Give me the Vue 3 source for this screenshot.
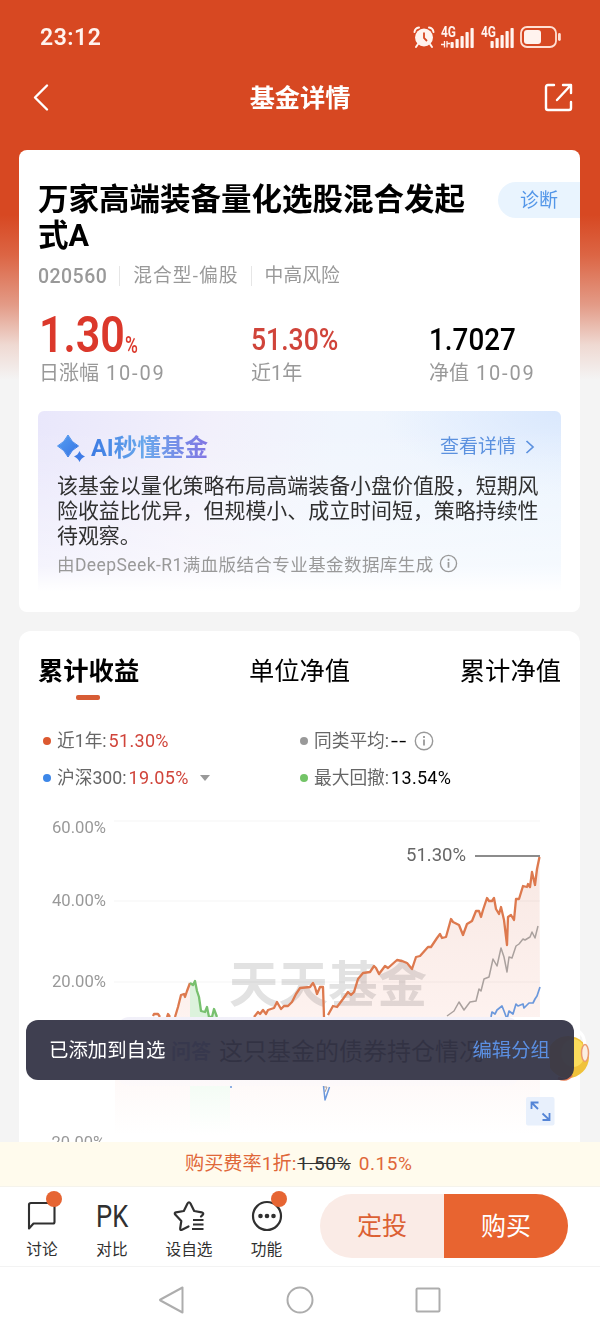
<script setup>
import { ref } from 'vue'

const fund = {
  name: '万家高端装备量化选股混合发起式A',
  code: '020560',
  type: '混合型-偏股',
  risk: '中高风险'
}

const tabs = ['累计收益', '单位净值', '累计净值']
const activeTab = ref(0)

const signals = [[6, 9, 12, 16, 20], [7, 10, 13, 17, 20]]

const gridLines = [
  { label: '60.00%', y: 821, textY: 833 },
  { label: '40.00%', y: 901, textY: 906 },
  { label: '20.00%', y: 982, textY: 987 }
]

// Chart series
const fundStart = '153,1016 154,1014 158,1014 160,1017'
const fundStart2 = '167,1017 168,1014 170,1017'
const fundRise = '175,1017 178,1007 181,995 184,994 185,997 187,991 190,983'
const drawdown = '190,983 193,985 195,981 197,991 199,997 201,1011 205,1012 207,1007 209,1017 212,1017 214,1009 217,1017'
const fundMid = '254,1017 258,1012 260,1014 263,1010 266,1014 268,1010 274,1008 277,1002 281,1009 284,1006 288,1006 292,1002 296,994 300,988 310,987 313,983 315,987 317,994 320,987 323,987 324,1017'
const fundMain = '328,1015 333,1006 337,1007 343,999 348,992 351,995 354,992 358,979 363,973 370,972 374,966 376,968 379,974 385,966 388,968 397,960 402,961 407,963 412,969 416,957 420,956 428,947 431,947 437,938 440,934 442,938 446,937 451,919 453,922 459,925 463,935 467,924 472,921 476,911 479,911 481,917 483,910 487,898 489,901 492,901 494,898 496,909 499,914 501,907 504,920 507,945 508,917 511,915 514,920 516,899 519,899 523,886 527,887 528,884 530,887 532,872 535,885 537,869 539.5,857'
const average = '447,1016 454,1011 459,1002 464,1010 470,1002 476,1001 479,989 481,991 484,979 489,977 493,959 497,966 501,948 504,957 507,972 509,957 512,958 516,946 519,944 523,939 525,940 530,937 532,932 535,938 538,926'
const index300 = '491,1017 492,1012 495,1014 497,1010 502,1006 504,1011 507,1019 509,1011 513,1014 516,1004 518,1006 523,1004 524,1008 529,1003 533,1003 535,999 537,996 540,987'

const actions = [
  { key: 'talk', label: '讨论', badge: true },
  { key: 'pk', label: '对比' },
  { key: 'star', label: '设自选' },
  { key: 'more', label: '功能', badge: true }
]
</script>

<template>
  <div class="page">
    <div class="scroll">
      <div class="status-bar">
        <span class="clock">23:12</span>
        <div class="status-icons">
          <svg width="22" height="24" viewBox="0 0 22 24">
            <circle cx="11" cy="12.500" r="9" fill="#fff3ee" />
            <path d="M1.500 7 Q2 3 6 2.500M20.500 7Q20 3 16 2.500M5 19l-2 3M17 19l2 3" stroke="#fff3ee" stroke-width="2" fill="none" stroke-linecap="round" />
            <path d="M11 7.500v5.500l3 3" stroke="#d74822" stroke-width="1.800" fill="none" />
          </svg>
          <svg v-for="(bars, n) in signals" :key="n" class="signal" width="34" height="24" viewBox="0 0 34 24">
            <text x="0" y="11.500" font-size="14" font-weight="700" textLength="15" lengthAdjust="spacingAndGlyphs" fill="#fff3ee">4G</text>
            <path v-if="n === 0" d="M0 19.500h4M3.500 16v6.500M6 16v6.500M6 18.500h3" stroke="#fff3ee" stroke-width="1.300" fill="none" />
            <rect v-for="(h, i) in bars" :key="i" :x="9.5 + i * 5" :y="23 - h" width="3.200" :height="h" rx=".8" fill="#fff3ee" />
          </svg>
          <svg class="battery" width="42" height="24" viewBox="0 0 42 24">
            <rect x="1" y="2" width="35" height="20" rx="6" fill="none" stroke="#ffe0d4" stroke-width="1.800" />
            <rect x="4" y="5" width="17" height="14" rx="3" fill="#fff3ee" />
            <rect x="38" y="8" width="2.800" height="8" rx="1.400" fill="#ffe0d4" />
          </svg>
        </div>
      </div>

      <div class="nav-bar">
        <svg width="20" height="30" viewBox="0 0 20 30">
          <path d="M15 3 3 15 15 27" transform="translate(0 .5)" fill="none" stroke="#fff" stroke-width="2.400" stroke-linecap="round" stroke-linejoin="round" />
        </svg>
        <h1>基金详情</h1>
        <svg width="30" height="30" viewBox="0 0 30 30">
          <path d="M11 3H5Q3 3 3 5v21q0 2 2 2h21q2 0 2-2v-6M14 18 27 4M20 3h8v8" fill="none" stroke="#fff" stroke-width="2.400" stroke-linecap="round" stroke-linejoin="round" />
        </svg>
      </div>

      <div class="card fund-card">
        <div class="fund-head">
          <h2>{{ fund.name }}</h2>
          <span class="diagnose">诊断</span>
        </div>
        <div class="meta">
          <span class="code">{{ fund.code }}</span>
          <span class="type">{{ fund.type }}</span>
          <span>{{ fund.risk }}</span>
        </div>
        <div class="metrics">
          <div>
            <div class="value"><span class="big">1.30</span><span class="pct">%</span></div>
            <div class="caption">日涨幅 <span>10-09</span></div>
          </div>
          <div>
            <div class="value"><span class="mid red">51.30%</span></div>
            <div class="caption">近1年</div>
          </div>
          <div>
            <div class="value"><span class="mid nav-value">1.7027</span></div>
            <div class="caption">净值 <span>10-09</span></div>
          </div>
        </div>

        <div class="ai-box">
          <div class="ai-head">
            <svg width="30" height="30" viewBox="0 0 30 30">
              <defs>
                <linearGradient id="spark" x1="0" y1="0" x2="1" y2="1">
                  <stop offset="0" stop-color="#57a0f2" />
                  <stop offset="1" stop-color="#3673e3" />
                </linearGradient>
              </defs>
              <path d="M11 3Q14.500 10.500 21.500 14Q14.500 17.500 11 25Q7.500 17.500 .5 14Q7.500 10.500 11 3Z" fill="url(#spark)" stroke="url(#spark)" stroke-linejoin="round" />
              <path d="M22.500 19Q24 23 28 24.500Q24 26 22.500 30Q21 26 17 24.500Q21 23 22.500 19Z" fill="#3f7be6" />
            </svg>
            <span class="ai-title">AI秒懂基金</span>
            <span class="ai-more">查看详情</span>
            <svg width="10" height="16" viewBox="0 0 10 16">
              <path d="M1.500 2 8 8 1.500 14" fill="none" stroke="#5b91df" stroke-width="1.700" />
            </svg>
          </div>
          <p>该基金以量化策略布局高端装备小盘价值股，短期风险收益比优异，但规模小、成立时间短，策略持续性待观察。</p>
          <div class="ai-source">
            <span>由DeepSeek-R1满血版结合专业基金数据库生成</span>
            <svg width="19" height="19" viewBox="0 0 20 20">
              <circle cx="10" cy="10" r="8.500" fill="none" stroke="#999" stroke-width="1.400" />
              <path d="M10 8.500v6M10 5v2" stroke="#999" stroke-width="1.800" />
            </svg>
          </div>
        </div>
      </div>

      <div class="card chart-card">
        <div class="tabs">
          <span v-for="(tab, i) in tabs" :key="tab" :class="{ active: activeTab === i }" @click="activeTab = i">{{ tab }}</span>
        </div>
        <div class="legend">
          <div><i class="dot orange"></i>近1年:<b class="red">51.30%</b></div>
          <div>
            <i class="dot gray"></i>同类平均:<b class="dashes">--</b>
            <svg class="info" width="20" height="20" viewBox="0 0 20 20">
              <circle cx="10" cy="10" r="8.700" fill="none" stroke="#999" stroke-width="1.400" />
              <path d="M10 8.500v6M10 5v2" stroke="#999" stroke-width="1.800" />
            </svg>
          </div>
          <div><i class="dot blue"></i>沪深300:<b class="red">19.05%</b><i class="caret"></i></div>
          <div><i class="dot green"></i>最大回撤:<b>13.54%</b></div>
        </div>

        <svg class="chart" width="561" height="342" viewBox="19 808 561 342">
          <defs>
            <linearGradient id="area" x1="0" y1="850" x2="0" y2="1130" gradientUnits="userSpaceOnUse">
              <stop offset="0" stop-color="#f8e8e3" />
              <stop offset=".55" stop-color="#fdf1ee" />
              <stop offset="1" stop-color="#fffefe" />
            </linearGradient>
            <linearGradient id="lower" x1="0" y1="0" x2="0" y2="1">
              <stop offset="0" stop-color="#fef9f8" />
              <stop offset="1" stop-color="#fff" />
            </linearGradient>
            <linearGradient id="lower-green" x1="0" y1="0" x2="0" y2="1">
              <stop offset="0" stop-color="#f4fcf5" />
              <stop offset="1" stop-color="#fff" />
            </linearGradient>
          </defs>
          <text class="watermark" x="229" y="1002" textLength="198" lengthAdjust="spacingAndGlyphs">天天基金</text>
          <g class="areas">
            <polygon :points="`${fundRise} 190,1017 175,1017`" fill="url(#area)" />
            <polygon :points="`${drawdown} 190,1017`" fill="#dcf2dc" />
            <polygon :points="`${fundMid} 254,1017`" fill="url(#area)" />
            <polygon :points="`${fundMain} 540,1017 328,1017`" fill="url(#area)" />
            <rect x="115" y="1080" width="425" height="55" fill="url(#lower)" />
            <rect x="190" y="1086" width="40" height="49" fill="url(#lower-green)" />
          </g>
          <g v-for="line in gridLines" :key="line.label">
            <line x1="114" x2="540" :y1="line.y" :y2="line.y" stroke="#000" stroke-opacity=".045" />
            <text class="axis" x="52" :y="line.textY" textLength="54" lengthAdjust="spacingAndGlyphs">{{ line.label }}</text>
          </g>
          <text class="axis" x="47" y="1148" textLength="58" lengthAdjust="spacingAndGlyphs">-20.00%</text>
          <g fill="none" stroke-width="2.300" stroke-linejoin="round">
            <polyline v-for="pts in [fundStart, fundStart2, fundRise, fundMid, fundMain]" :key="pts" :points="pts" stroke="#dd794e" />
            <polyline :points="drawdown" stroke="#77c06e" />
            <polyline :points="average" stroke="#aaa19e" stroke-width="1.500" />
            <polyline :points="index300" stroke="#6b98dc" stroke-width="1.700" />
            <path d="M323.500 1086 325 1100 329.500 1087M230 1087h2" stroke="#6b98dc" stroke-width="1.500" />
            <path d="M324 1087h3l-2 5" stroke="#aaa19e" stroke-width="1" />
          </g>
          <text x="406" y="861" font-size="18" fill="#666" textLength="60" lengthAdjust="spacingAndGlyphs">51.30%</text>
          <line x1="475" x2="540" y1="856" y2="856" stroke="#666" stroke-width="1.300" />
          <rect x="526" y="1097" width="28.500" height="28.500" rx="2" fill="#e8f0fc" />
          <path d="M531.500 1109v-6.500h7M531.500 1102.500l6.500 6.500M549.500 1113v7h-7M549.500 1120l-7-6.500" fill="none" stroke="#5585d6" stroke-width="1.800" />
        </svg>
      </div>
    </div>

    <div class="ask-bar"><em>问答</em><span>这只基金的债券持仓情况</span></div>
    <svg class="mascot" width="42" height="58" viewBox="0 0 42 58">
      <circle cx="18" cy="32" r="21" fill="#f0c23a" />
      <ellipse cx="23" cy="28" rx="12" ry="14" fill="#fbdc5c" />
      <path d="M26 5Q35 8 35 22" fill="none" stroke="#fff" stroke-width="3" />
      <ellipse cx="35" cy="28" rx="3.500" ry="8.500" fill="#fbeee2" stroke="#ea9a70" stroke-width="1.500" />
      <path d="M8 53Q17 57 22 50" fill="none" stroke="#e77c52" stroke-width="2.500" />
    </svg>
    <div class="toast"><span>已添加到自选</span><a>编辑分组</a></div>

    <div class="fee">购买费率1折:<del>1.50%</del><span>0.15%</span></div>

    <div class="action-bar">
      <div v-for="item in actions" :key="item.key" class="action" :class="item.key">
        <div class="action-icon">
          <svg v-if="item.key === 'talk'" width="32" height="32" viewBox="0 0 32 32">
            <path d="M5 3h22q1.500 0 1.500 1.500V22q0 1.500-1.500 1.500H7.500L3 28.500V4.500Q3 3 5 3" fill="none" stroke="#303030" stroke-width="2.100" stroke-linejoin="round" />
          </svg>
          <span v-else-if="item.key === 'pk'" class="pk-text">PK</span>
          <svg v-else-if="item.key === 'star'" width="32" height="32" viewBox="0 0 32 32">
            <path d="M15.500 26.500 9 29.800q-2 .8-1.800-1.500L8.300 21 2.200 14.600Q1 12.900 3 12.300L10.800 11 14.500 3.500q1.500-2.500 3 0L21.200 11l7.500 1.300q2.500.7 1 2.600L28 16.500" fill="none" stroke="#303030" stroke-width="2.200" stroke-linejoin="round" stroke-linecap="round" />
            <path d="M20 20h10.500M20 24.500h10.500M19 29h11.500" stroke="#303030" stroke-width="2.200" />
          </svg>
          <svg v-else width="32" height="32" viewBox="0 0 32 32">
            <circle cx="16" cy="16" r="14" fill="none" stroke="#303030" stroke-width="2.200" />
            <g fill="#303030"><circle cx="9.500" cy="16" r="2.300" /><circle cx="16" cy="16" r="2.300" /><circle cx="22.500" cy="16" r="2.300" /></g>
          </svg>
          <i v-if="item.badge" class="badge"></i>
        </div>
        <div class="action-label">{{ item.label }}</div>
      </div>
      <div class="trade">
        <button class="plan">定投</button>
        <button class="buy">购买</button>
      </div>
    </div>

    <div class="system-nav">
      <svg width="28" height="30" viewBox="0 0 28 30">
        <path d="M24.500 2.500v25L2.500 15.500q-1-.5 0-1Z" fill="none" stroke="#adadad" stroke-width="2" stroke-linejoin="round" />
      </svg>
      <svg width="28" height="30" viewBox="0 0 28 30">
        <circle cx="14" cy="15" r="12.500" fill="none" stroke="#adadad" stroke-width="2" />
      </svg>
      <svg width="28" height="30" viewBox="0 0 28 30">
        <rect x="2.500" y="3.500" width="23" height="23" rx="1" fill="none" stroke="#adadad" stroke-width="2" />
      </svg>
    </div>
  </div>
</template>

<style>
body {
  margin: 0;
  background: #f4f4f4;
}
</style>

<style scoped>
.page {
  position: relative;
  display: flex;
  flex-direction: column;
  width: 600px;
  height: 1332px;
  overflow: hidden;
  color: #000;
  font-family: Roboto, "Noto Sans CJK SC", sans-serif;
  white-space: nowrap;
}

svg {
  display: block;
  flex-shrink: 0;
}

.scroll {
  height: 1142px;
  overflow: hidden;
  background: linear-gradient(#d74822 0, #d74822 215px, #dc6544 255px, #e39b87 305px, #efd9d2 345px, #f4f4f4 380px);
}

.status-bar {
  display: flex;
  justify-content: space-between;
  align-items: center;
  box-sizing: border-box;
  height: 74px;
  padding: 0 38px 0 40px;
  color: #fff3ee;
}

.clock {
  font-size: 23px;
  font-weight: 600;
  letter-spacing: 0.500px;
}

.status-icons {
  display: flex;
  align-items: center;
}

.signal {
  margin-left: 6px;
}

.battery {
  margin-left: 5px;
}

.nav-bar {
  display: flex;
  justify-content: space-between;
  align-items: center;
  height: 46px;
  padding: 0 27px 0 32px;
  color: #fff;
}

.nav-bar h1 {
  margin: 0 0 3px 5px;
  font-size: 25.200px;
  font-weight: 700;
}

.card {
  width: 561px;
  margin-left: 19px;
  background: #fff;
}

.fund-card {
  box-sizing: border-box;
  height: 462px;
  margin-top: 30px;
  border-radius: 8px;
  overflow: hidden;
}

.fund-head {
  display: flex;
  justify-content: space-between;
  padding: 32px 0 0 19px;
}

.fund-head h2 {
  width: 432px;
  margin: 0;
  font-size: 30.500px;
  font-weight: 700;
  line-height: 36px;
  white-space: normal;
}

.diagnose {
  box-sizing: border-box;
  width: 82px;
  height: 36px;
  padding-left: 22px;
  border-radius: 18px 0 0 18px;
  background: #e9f4fe;
  color: #5396e8;
  font-size: 19px;
  line-height: 37px;
}

.meta {
  display: flex;
  align-items: center;
  height: 24px;
  margin: 10px 0 0 19px;
  color: #999;
  font-size: 18.800px;
}

.meta span + span {
  margin-left: 12px;
  padding-left: 13px;
  border-left: 1px solid #e6e6e6;
  line-height: 20px;
}

.meta .type {
  letter-spacing: 1.050px;
}

.meta .code {
  font-size: 19.500px;
  font-weight: 500;
  letter-spacing: 0.450px;
}

.metrics {
  display: grid;
  grid-template-columns: 212px 178px 1fr;
  margin: 20px 0 0 20px;
}

.value {
  display: flex;
  align-items: flex-end;
  height: 48px;
}

.big,
.mid,
.pct {
  display: inline-block;
  transform-origin: left bottom;
}

.big {
  width: 86px;
  margin-bottom: -4px;
  color: #db382b;
  font-size: 50px;
  font-weight: 600;
  line-height: 50px;
  transform: scaleX(0.86);
}

.pct {
  margin-bottom: -2px;
  color: #db382b;
  font-size: 23px;
  font-weight: 500;
  line-height: 24px;
  transform: scaleX(0.76);
}

.mid {
  font-size: 32px;
  font-weight: 500;
  line-height: 33px;
  transform: scaleX(0.83);
}

.nav-value {
  transform: scaleX(0.87);
}

.caption {
  height: 32px;
  color: #999;
  font-size: 20px;
  line-height: 34px;
}

.caption span {
  margin-left: 2px;
  letter-spacing: 1.800px;
}

.red {
  color: #d0443a !important;
}

.ai-box {
  height: 182px;
  margin: 23px 19px 0;
  border-radius: 6px 6px 0 0;
  background:
    linear-gradient(to bottom, rgba(255, 255, 255, 0) 10%, rgba(255, 255, 255, 0.5) 85%, #fff 99%),
    radial-gradient(ellipse 180px 80px at 100% 0, #dae8fd 0, rgba(226, 238, 254, 0) 100%),
    linear-gradient(100deg, #e9e7fb 0, #f2f0fb 32%, #f0f5fd 55%, #ebf4fe 100%);
}

.ai-head {
  display: flex;
  align-items: center;
  height: 62px;
  padding: 9px 26px 0 19px;
  box-sizing: border-box;
}

.ai-title {
  margin: 0 auto 0 4px;
  padding-bottom: 2px;
  background: linear-gradient(90deg, #3c7be3, #69a8ec 45%, #8275e3);
  background-clip: text;
  color: transparent;
  font-size: 23.600px;
  font-weight: 700;
}

.ai-more {
  margin-right: 9px;
  color: #5b91df;
  font-size: 19px;
  line-height: 24px;
}

.ai-box p {
  width: 484px;
  height: 75px;
  margin: 1px 0 -1px 19px;
  color: #303030;
  font-size: 20.950px;
  line-height: 25px;
  white-space: normal;
}

.ai-source {
  display: flex;
  align-items: center;
  gap: 5px;
  height: 31px;
  margin-left: 19px;
  color: #999;
  font-size: 17.500px;
  letter-spacing: 0.420px;
}

.chart-card {
  height: 530px;
  margin-top: 19px;
  border-radius: 12px 12px 0 0;
}

.tabs {
  display: flex;
  justify-content: space-between;
  height: 92px;
  padding: 0 19px;
  font-size: 25.300px;
}

.tabs span {
  position: relative;
  height: 80px;
  line-height: 81px;
}

.tabs .active {
  font-weight: 700;
}

.tabs .active::after {
  content: "";
  position: absolute;
  left: 38px;
  top: 64px;
  width: 24px;
  height: 4.500px;
  border-radius: 2px;
  background: #d75c35;
}

.legend {
  display: grid;
  grid-template-columns: 257px 1fr;
  grid-auto-rows: 36.500px;
  height: 85px;
  padding-left: 24px;
  color: #666;
  font-size: 17.700px;
  line-height: 20px;
}

.legend div {
  display: flex;
  align-items: center;
}

.legend b {
  margin-left: 2px;
  color: #000;
  font-size: 18px;
  font-weight: 400;
  letter-spacing: 0.300px;
}

.legend .dashes {
  width: 19px;
  letter-spacing: 1px;
  transform: scaleX(1.4);
  transform-origin: left;
}

.dot {
  width: 8px;
  height: 8px;
  margin-right: 6px;
  border-radius: 50%;
}

.orange {
  background: #dc5930;
}

.gray {
  background: #999;
}

.blue {
  background: #3d87e8;
}

.green {
  background: #73c467;
}

.caret {
  margin-left: 11px;
  border: 5px solid transparent;
  border-top: 6px solid #999;
  border-bottom: 0;
}

.info {
  margin-left: 4px;
}

.axis {
  fill: #999;
  font-size: 16.500px;
}

.watermark {
  fill: #e2e2e2;
  font-family: "Noto Sans CJK SC", sans-serif;
  font-size: 49px;
  font-weight: 700;
}

.areas {
  mix-blend-mode: multiply;
}

.ask-bar {
  position: absolute;
  left: 117px;
  top: 1017px;
  display: flex;
  align-items: center;
  box-sizing: border-box;
  width: 402px;
  height: 69px;
  padding-left: 54px;
  border-radius: 12px;
  background: linear-gradient(#f1f0f9, #fdf9fa);
  color: #111;
  font-size: 24px;
  line-height: 66px;
}

.ask-bar em {
  width: 48px;
  color: #6a73c0;
  font-size: 20px;
  font-style: normal;
  font-weight: 700;
}

.mascot {
  position: absolute;
  left: 550px;
  top: 1025px;
}

.toast {
  position: absolute;
  left: 26px;
  top: 1020px;
  display: flex;
  justify-content: space-between;
  align-items: center;
  box-sizing: border-box;
  width: 548px;
  height: 60px;
  padding: 1px 24px 0 23px;
  border-radius: 12px;
  background: rgba(53, 53, 71, 0.95);
  color: #fff;
  font-size: 19.400px;
  line-height: 56px;
}

.toast a {
  color: #5b8fe2;
}

.fee {
  box-sizing: border-box;
  height: 45px;
  padding-left: 185px;
  background: #fffbed;
  border-bottom: 1px solid #f5f3ec;
  color: #df6739;
  font-size: 19.200px;
  line-height: 44px;
}

.fee del {
  margin: 0 8px 0 1px;
  color: #333;
  font-size: 19px;
  letter-spacing: 0.500px;
}

.fee span {
  font-size: 19px;
  letter-spacing: 0.500px;
}

.action-bar {
  display: flex;
  box-sizing: border-box;
  height: 80px;
  padding: 7px 0 0 12px;
  border-bottom: 1px solid #f3f3f3;
  background: #fff;
}

.action {
  display: flex;
  flex-direction: column;
  align-items: center;
  width: 60px;
  margin-right: 10px;
}

.action.star {
  width: 74px;
  margin-right: 10px;
}

.action.more {
  width: 61px;
  margin-right: 23px;
}

.action-icon {
  position: relative;
  display: flex;
  align-items: center;
  justify-content: center;
  width: 32px;
  height: 44px;
}

.pk-text {
  color: #303030;
  font-size: 32px;
  line-height: 46px;
  transform: scaleX(0.8);
}

.badge {
  position: absolute;
  left: 20px;
  top: -3px;
  width: 16px;
  height: 16px;
  border-radius: 50%;
  background: #e66533;
}

.action-label {
  color: #303030;
  font-size: 15.700px;
  line-height: 24px;
}

.trade {
  display: flex;
  width: 248px;
  height: 64px;
  border-radius: 32px;
  overflow: hidden;
}

.trade button {
  flex: 1;
  padding: 0 0 4px;
  border: 0;
  font-family: inherit;
  font-size: 25px;
}

.plan {
  background: #faebe6;
  color: #dc6034;
}

.buy {
  background: #e86430;
  color: #fff;
}

.system-nav {
  display: flex;
  justify-content: center;
  align-items: center;
  gap: 100px;
  height: 65px;
  background: #fff;
}
</style>
